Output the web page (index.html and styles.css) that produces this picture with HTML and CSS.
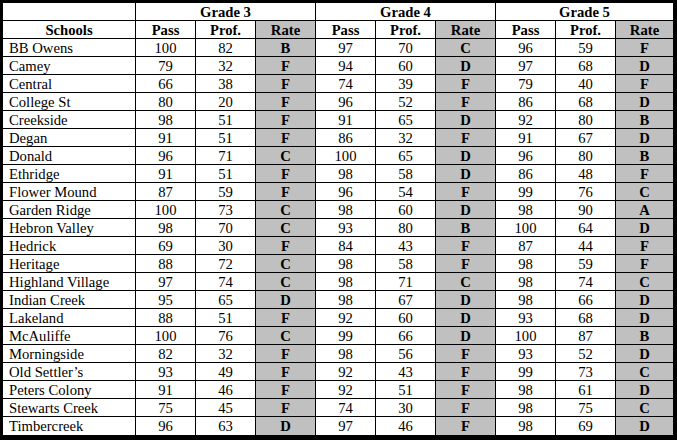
FILE: index.html
```html
<!DOCTYPE html>
<html>
<head>
<meta charset="utf-8">
<link rel="stylesheet" href="styles.css">
</head>
<body>
<div class="table">
  <div class="c"></div>
  <div class="c h span3">Grade 3</div>
  <div class="c h span3">Grade 4</div>
  <div class="c h span3">Grade 5</div>

  <div class="c h">Schools</div>
  <div class="c h">Pass</div><div class="c h">Prof.</div><div class="c h r">Rate</div>
  <div class="c h">Pass</div><div class="c h">Prof.</div><div class="c h r">Rate</div>
  <div class="c h">Pass</div><div class="c h">Prof.</div><div class="c h r">Rate</div>

  <div class="c n">BB Owens</div><div class="c">100</div><div class="c">82</div><div class="c r">B</div><div class="c">97</div><div class="c">70</div><div class="c r">C</div><div class="c">96</div><div class="c">59</div><div class="c r">F</div>
  <div class="c n">Camey</div><div class="c">79</div><div class="c">32</div><div class="c r">F</div><div class="c">94</div><div class="c">60</div><div class="c r">D</div><div class="c">97</div><div class="c">68</div><div class="c r">D</div>
  <div class="c n">Central</div><div class="c">66</div><div class="c">38</div><div class="c r">F</div><div class="c">74</div><div class="c">39</div><div class="c r">F</div><div class="c">79</div><div class="c">40</div><div class="c r">F</div>
  <div class="c n">College St</div><div class="c">80</div><div class="c">20</div><div class="c r">F</div><div class="c">96</div><div class="c">52</div><div class="c r">F</div><div class="c">86</div><div class="c">68</div><div class="c r">D</div>
  <div class="c n">Creekside</div><div class="c">98</div><div class="c">51</div><div class="c r">F</div><div class="c">91</div><div class="c">65</div><div class="c r">D</div><div class="c">92</div><div class="c">80</div><div class="c r">B</div>
  <div class="c n">Degan</div><div class="c">91</div><div class="c">51</div><div class="c r">F</div><div class="c">86</div><div class="c">32</div><div class="c r">F</div><div class="c">91</div><div class="c">67</div><div class="c r">D</div>
  <div class="c n">Donald</div><div class="c">96</div><div class="c">71</div><div class="c r">C</div><div class="c">100</div><div class="c">65</div><div class="c r">D</div><div class="c">96</div><div class="c">80</div><div class="c r">B</div>
  <div class="c n">Ethridge</div><div class="c">91</div><div class="c">51</div><div class="c r">F</div><div class="c">98</div><div class="c">58</div><div class="c r">D</div><div class="c">86</div><div class="c">48</div><div class="c r">F</div>
  <div class="c n">Flower Mound</div><div class="c">87</div><div class="c">59</div><div class="c r">F</div><div class="c">96</div><div class="c">54</div><div class="c r">F</div><div class="c">99</div><div class="c">76</div><div class="c r">C</div>
  <div class="c n">Garden Ridge</div><div class="c">100</div><div class="c">73</div><div class="c r">C</div><div class="c">98</div><div class="c">60</div><div class="c r">D</div><div class="c">98</div><div class="c">90</div><div class="c r">A</div>
  <div class="c n">Hebron Valley</div><div class="c">98</div><div class="c">70</div><div class="c r">C</div><div class="c">93</div><div class="c">80</div><div class="c r">B</div><div class="c">100</div><div class="c">64</div><div class="c r">D</div>
  <div class="c n">Hedrick</div><div class="c">69</div><div class="c">30</div><div class="c r">F</div><div class="c">84</div><div class="c">43</div><div class="c r">F</div><div class="c">87</div><div class="c">44</div><div class="c r">F</div>
  <div class="c n">Heritage</div><div class="c">88</div><div class="c">72</div><div class="c r">C</div><div class="c">98</div><div class="c">58</div><div class="c r">F</div><div class="c">98</div><div class="c">59</div><div class="c r">F</div>
  <div class="c n">Highland Village</div><div class="c">97</div><div class="c">74</div><div class="c r">C</div><div class="c">98</div><div class="c">71</div><div class="c r">C</div><div class="c">98</div><div class="c">74</div><div class="c r">C</div>
  <div class="c n">Indian Creek</div><div class="c">95</div><div class="c">65</div><div class="c r">D</div><div class="c">98</div><div class="c">67</div><div class="c r">D</div><div class="c">98</div><div class="c">66</div><div class="c r">D</div>
  <div class="c n">Lakeland</div><div class="c">88</div><div class="c">51</div><div class="c r">F</div><div class="c">92</div><div class="c">60</div><div class="c r">D</div><div class="c">93</div><div class="c">68</div><div class="c r">D</div>
  <div class="c n">McAuliffe</div><div class="c">100</div><div class="c">76</div><div class="c r">C</div><div class="c">99</div><div class="c">66</div><div class="c r">D</div><div class="c">100</div><div class="c">87</div><div class="c r">B</div>
  <div class="c n">Morningside</div><div class="c">82</div><div class="c">32</div><div class="c r">F</div><div class="c">98</div><div class="c">56</div><div class="c r">F</div><div class="c">93</div><div class="c">52</div><div class="c r">D</div>
  <div class="c n">Old Settler’s</div><div class="c">93</div><div class="c">49</div><div class="c r">F</div><div class="c">92</div><div class="c">43</div><div class="c r">F</div><div class="c">99</div><div class="c">73</div><div class="c r">C</div>
  <div class="c n">Peters Colony</div><div class="c">91</div><div class="c">46</div><div class="c r">F</div><div class="c">92</div><div class="c">51</div><div class="c r">F</div><div class="c">98</div><div class="c">61</div><div class="c r">D</div>
  <div class="c n">Stewarts Creek</div><div class="c">75</div><div class="c">45</div><div class="c r">F</div><div class="c">74</div><div class="c">30</div><div class="c r">F</div><div class="c">98</div><div class="c">75</div><div class="c r">C</div>
  <div class="c n">Timbercreek</div><div class="c">96</div><div class="c">63</div><div class="c r">D</div><div class="c">97</div><div class="c">46</div><div class="c r">F</div><div class="c">98</div><div class="c">69</div><div class="c r">D</div>
</div>
</body>
</html>
```
FILE: styles.css
```css
html, body {
  margin: 0;
  padding: 0;
  background: #ffffff;
}
.table {
  display: grid;
  grid-template-columns: 132px repeat(8, 59px) 57px;
  grid-template-rows: repeat(23, 17px) 18px;
  gap: 1px;
  width: 670px;
  background: #000000;
  border-style: solid;
  border-color: #000000;
  border-width: 3px 4px 5px 3px;
  font-family: "Liberation Serif", "DejaVu Serif", serif;
  font-size: 14.67px;
  color: #000000;
}
.c {
  background: #ffffff;
  display: flex;
  align-items: flex-start;
  justify-content: center;
  box-sizing: border-box;
  padding-top: 1px;
  line-height: 17px;
  white-space: nowrap;
}
.span3 {
  grid-column: span 3;
}
.h {
  font-weight: bold;
}
.r {
  background: #c0c0c0;
  font-weight: bold;
}
.n {
  justify-content: flex-start;
  padding-left: 6px;
}
```
